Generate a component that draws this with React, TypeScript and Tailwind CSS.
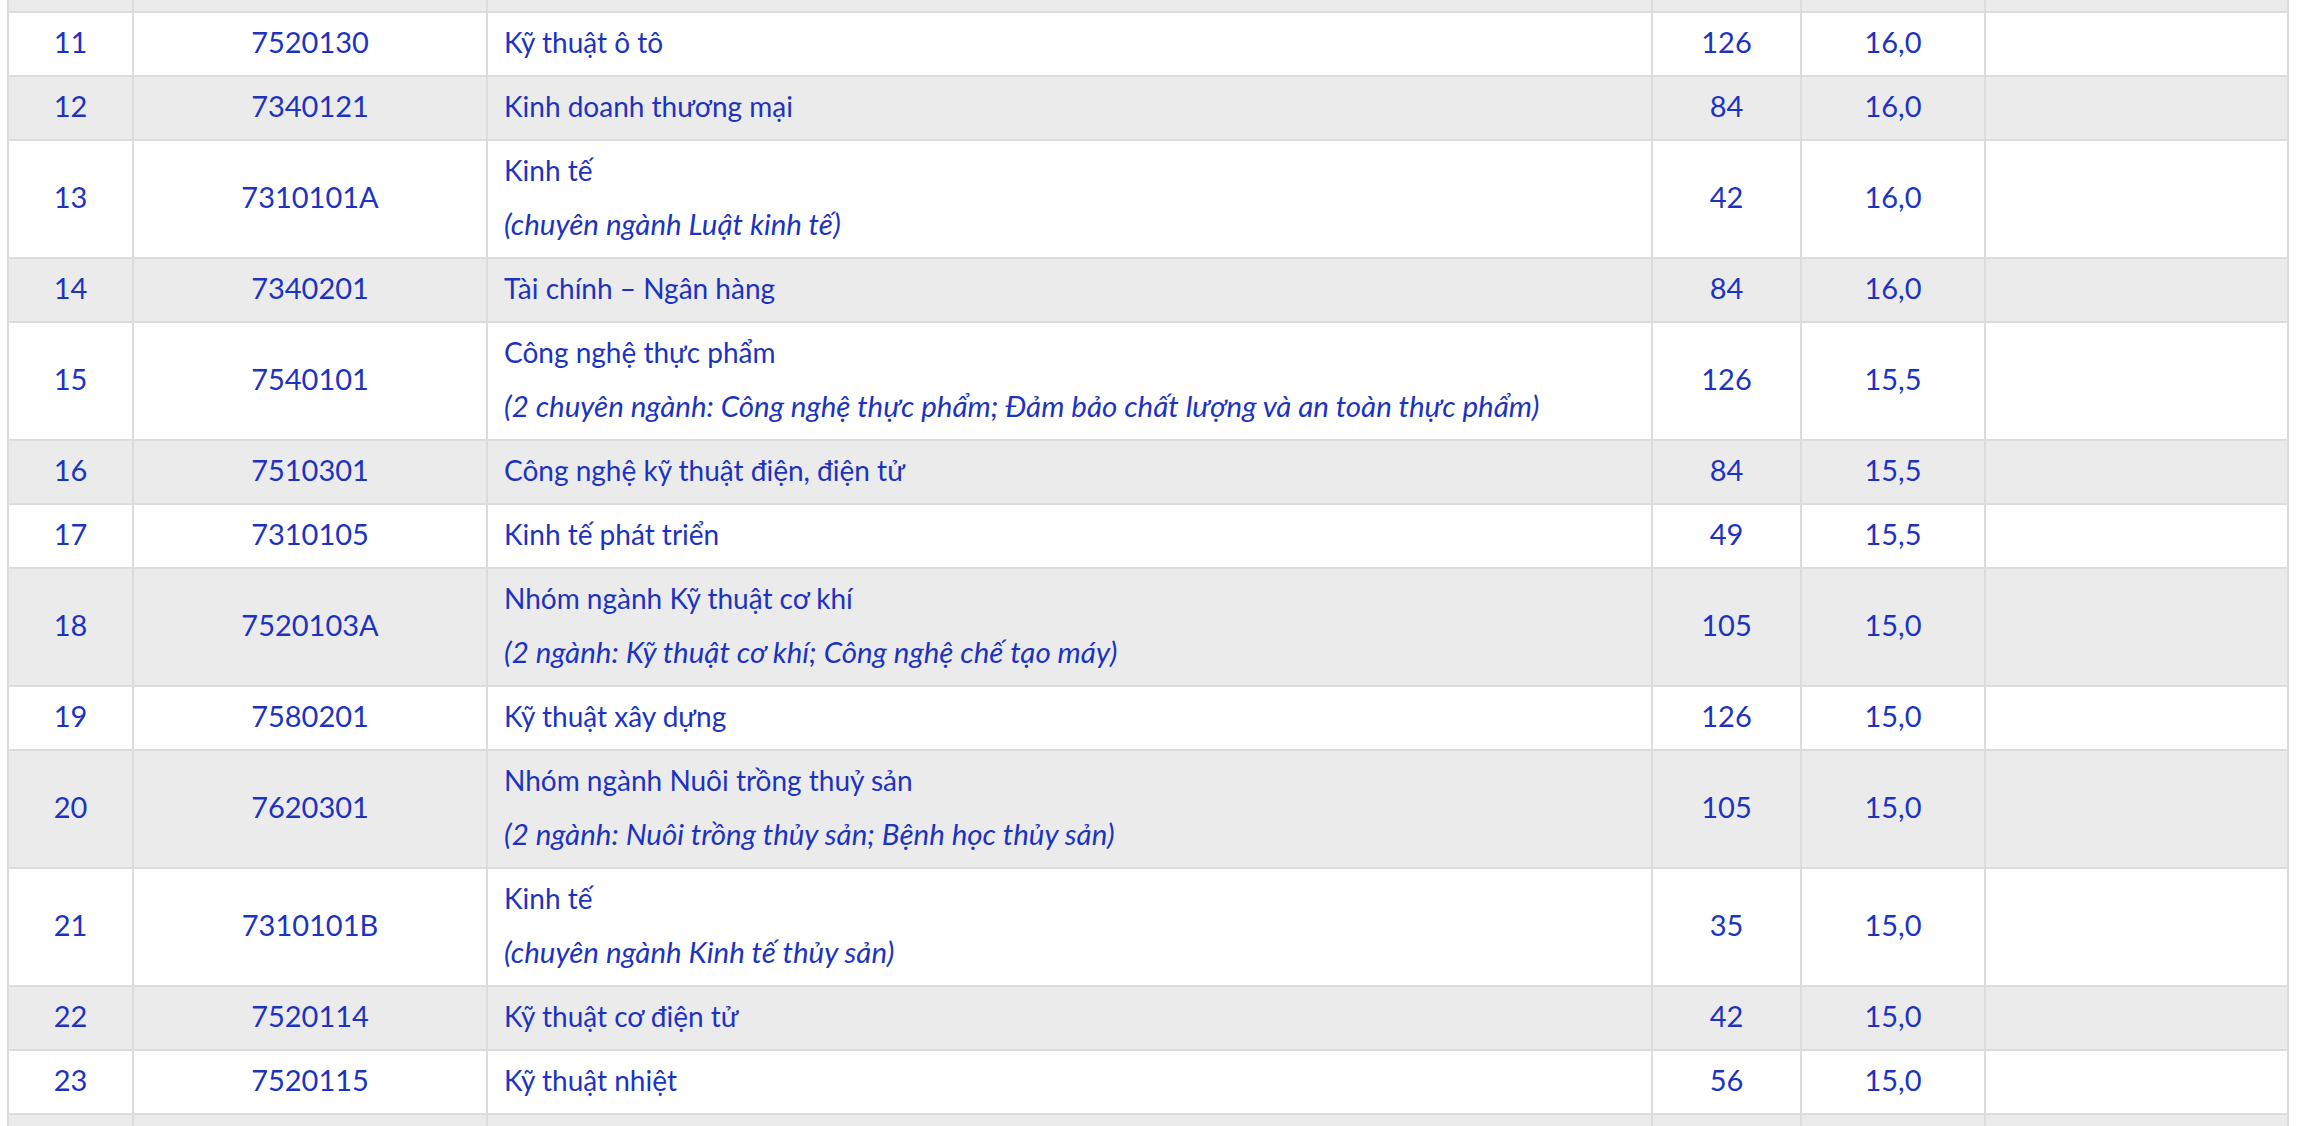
const rows: [string, string, string, string | null, string, string][] = [
  ['11', '7520130', 'Kỹ thuật ô tô', null, '126', '16,0'],
  ['12', '7340121', 'Kinh doanh thương mại', null, '84', '16,0'],
  ['13', '7310101A', 'Kinh tế', '(chuyên ngành Luật kinh tế)', '42', '16,0'],
  ['14', '7340201', 'Tài chính – Ngân hàng', null, '84', '16,0'],
  [
    '15',
    '7540101',
    'Công nghệ thực phẩm',
    '(2 chuyên ngành: Công nghệ thực phẩm; Đảm bảo chất lượng và an toàn thực phẩm)',
    '126',
    '15,5',
  ],
  ['16', '7510301', 'Công nghệ kỹ thuật điện, điện tử', null, '84', '15,5'],
  ['17', '7310105', 'Kinh tế phát triển', null, '49', '15,5'],
  [
    '18',
    '7520103A',
    'Nhóm ngành Kỹ thuật cơ khí',
    '(2 ngành: Kỹ thuật cơ khí; Công nghệ chế tạo máy)',
    '105',
    '15,0',
  ],
  ['19', '7580201', 'Kỹ thuật xây dựng', null, '126', '15,0'],
  [
    '20',
    '7620301',
    'Nhóm ngành Nuôi trồng thuỷ sản',
    '(2 ngành: Nuôi trồng thủy sản; Bệnh học thủy sản)',
    '105',
    '15,0',
  ],
  ['21', '7310101B', 'Kinh tế', '(chuyên ngành Kinh tế thủy sản)', '35', '15,0'],
  ['22', '7520114', 'Kỹ thuật cơ điện tử', null, '42', '15,0'],
  ['23', '7520115', 'Kỹ thuật nhiệt', null, '56', '15,0'],
];

const cell = 'border-2 border-[#dcdcdc] px-[16px] pt-[2px] pb-[6px] align-middle';

export default function App() {
  return (
    <div className="h-screen overflow-hidden bg-white pl-[7px] font-['Lato',sans-serif] text-[29px] leading-[54px] text-[#1c33c2]">
      <table className="-mt-[53px] w-[2282px] table-fixed border-collapse">
        <colgroup>
          <col className="w-[125px]" />
          <col className="w-[354px]" />
          <col className="w-[1165px]" />
          <col className="w-[149px]" />
          <col className="w-[184px]" />
          <col className="w-[303px]" />
        </colgroup>
        <tbody>
          {/* row above the fold, only its bottom shows */}
          <tr className="bg-[#ebebeb]">
            <td className={cell}>&nbsp;</td>
            <td className={cell}></td>
            <td className={cell}></td>
            <td className={cell}></td>
            <td className={cell}></td>
            <td className={cell}></td>
          </tr>
          {rows.map(([stt, code, name, note, quota, score], i) => (
            <tr key={stt} className={i % 2 === 1 ? 'bg-[#ebebeb]' : 'bg-white'}>
              <td className={cell + ' text-center'}>{stt}</td>
              <td className={cell + ' text-center'}>{code}</td>
              <td className={cell + ' text-left'}>
                <div className="text-[28px]">{name}</div>
                {note && <div className="text-[29.5px] italic">{note}</div>}
              </td>
              <td className={cell + ' text-center'}>{quota}</td>
              <td className={cell + ' text-center'}>{score}</td>
              <td className={cell}></td>
            </tr>
          ))}
          <tr className="bg-[#ebebeb]">
            <td className={cell}>&nbsp;</td>
            <td className={cell}></td>
            <td className={cell}></td>
            <td className={cell}></td>
            <td className={cell}></td>
            <td className={cell}></td>
          </tr>
        </tbody>
      </table>
    </div>
  );
}
